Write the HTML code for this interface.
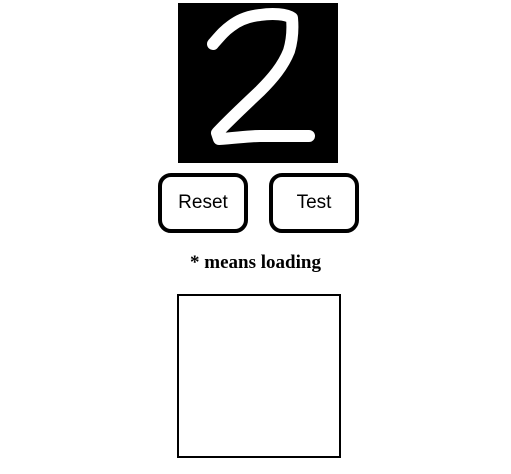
<!DOCTYPE html>
<html><head><style>
body{margin:0;width:511px;height:474px;background:#fff;position:relative;overflow:hidden}
.c{position:absolute;left:178px;top:3px;width:160px;height:160px;background:#000}
.b{position:absolute;top:173px;width:82px;height:52px;border:4px solid #000;border-radius:13px;box-sizing:content-box;font:19px "Liberation Sans",sans-serif;display:flex;align-items:center;justify-content:center;color:#000}
.t{position:absolute;left:0;width:511px;top:252px;text-align:center;font:bold 19px "Liberation Serif",serif}
.box{position:absolute;left:177px;top:294px;width:160px;height:160px;border:2px solid #000}
</style></head><body>
<div class="c"><svg width="160" height="160"><path d="M35 41 C42 33 46 28 53 23 C62 16 72 13 82 12 C95 10 108 11 114 15 C115 26 114 38 111 48 C105 63 95 75 82 88 C66 103 50 118 39 130 L41 136 C58 135 70 133 82 133 L131 133" fill="none" stroke="#fff" stroke-width="12" stroke-linecap="round" stroke-linejoin="round"/></svg></div>
<div class="b" style="left:158px">Reset</div>
<div class="b" style="left:269px">Test</div>
<div class="t">* means loading</div>
<div class="box"></div>
</body></html>
